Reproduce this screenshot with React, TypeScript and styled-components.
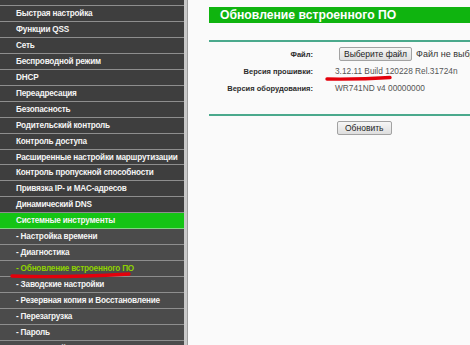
import React from 'react';
import styled, { createGlobalStyle } from 'styled-components';

const GlobalStyle = createGlobalStyle`
  html, body {
    margin: 0;
    padding: 0;
    background: #fafafa;
    overflow: hidden;
  }
  body {
    font-family: "Liberation Sans", Arial, sans-serif;
  }
`;

interface IMenuItem {
  label: string;
  sub?: boolean;
  active?: boolean;
  current?: boolean;
}

const menu: IMenuItem[] = [
  { label: 'Состояние' },
  { label: 'Быстрая настройка' },
  { label: 'Функции QSS' },
  { label: 'Сеть' },
  { label: 'Беспроводной режим' },
  { label: 'DHCP' },
  { label: 'Переадресация' },
  { label: 'Безопасность' },
  { label: 'Родительский контроль' },
  { label: 'Контроль доступа' },
  { label: 'Расширенные настройки маршрутизации' },
  { label: 'Контроль пропускной способности' },
  { label: 'Привязка IP- и MAC-адресов' },
  { label: 'Динамический DNS' },
  { label: 'Системные инструменты', active: true },
  { label: 'Настройка времени', sub: true },
  { label: 'Диагностика', sub: true },
  { label: 'Обновление встроенного ПО', sub: true, current: true },
  { label: 'Заводские настройки', sub: true },
  { label: 'Резервная копия и Восстановление', sub: true },
  { label: 'Перезагрузка', sub: true },
  { label: 'Пароль', sub: true },
  { label: 'Системный журнал', sub: true },
];

export default function App() {
  return (
    <>
      <GlobalStyle />
      <Page>
        <Sidebar>
          <Menu>
            {menu.map((item) => (
              <MenuItem key={item.label} $sub={item.sub} $active={item.active} $current={item.current}>
                {item.sub ? `- ${item.label}` : item.label}
              </MenuItem>
            ))}
          </Menu>
        </Sidebar>
        <Edge />
        <Content>
          <TitleBar>Обновление встроенного ПО</TitleBar>
          <Rule />
          <Form>
            <Label>Файл:</Label>
            <Value>
              <Button $pad={4}>Выберите файл</Button>
              <FileHint>Файл не выбран</FileHint>
            </Value>
            <Label>Версия прошивки:</Label>
            <Value>3.12.11 Build 120228 Rel.31724n</Value>
            <Label>Версия оборудования:</Label>
            <Value>WR741ND v4 00000000</Value>
          </Form>
          <Rule $mt={17} />
          <Actions>
            <Button $pad={7}>Обновить</Button>
          </Actions>
        </Content>
        <Marks width="470" height="345" viewBox="0 0 470 345">
          <path d="M12 276 Q60 278 129 274" />
          <path d="M327 79 Q360 79.5 390 77.5" />
        </Marks>
      </Page>
    </>
  );
}

const Page = styled.div`
  position: relative;
  display: flex;
  width: 470px;
  height: 345px;
  overflow: hidden;
`;

const Sidebar = styled.div`
  flex: none;
  width: 184px;
  overflow: hidden;
  background: #3e3e3e;
`;

const Menu = styled.div`
  display: flex;
  flex-direction: column;
  margin-top: -9.85px;
`;

const MenuItem = styled.div<{ $sub?: boolean; $active?: boolean; $current?: boolean }>`
  height: 14.95px;
  display: flex;
  align-items: center;
  padding-left: 16px;
  border-bottom: 1px solid ${(p) => (p.$active ? '#7fd67f' : '#8e8e8e')};
  background: ${(p) => (p.$active ? '#14c414' : p.$sub ? '#4b4b4b' : '#3e3e3e')};
  color: ${(p) => (p.$current ? '#8ed200' : '#f4f4f4')};
  font-size: 8.2px;
  font-weight: bold;
  letter-spacing: -0.2px;
  white-space: nowrap;
`;

const Edge = styled.div`
  flex: none;
  width: 3px;
  background: #c9c9c9;
  border-right: 1px solid #9c9c9c;
`;

const Content = styled.div`
  flex: 1;
  min-width: 0;
  padding: 7px 0 0 21px;
  white-space: nowrap;
`;

const TitleBar = styled.div`
  height: 16px;
  display: flex;
  align-items: center;
  padding-left: 11px;
  background: #0fb40f;
  color: #ffffff;
  font-size: 12.2px;
  font-weight: bold;
`;

const Rule = styled.div<{ $mt?: number }>`
  height: 2px;
  margin-top: ${(p) => p.$mt ?? 17}px;
  background: #4aa98c;
`;

const Form = styled.div`
  display: grid;
  grid-template-columns: 104px 1fr;
  grid-auto-rows: 17px;
  column-gap: 22px;
  margin-top: 3.5px;
  align-items: center;
`;

const Label = styled.div`
  text-align: right;
  color: #2c2c2c;
  font-size: 7.5px;
  font-weight: bold;
`;

const Value = styled.div`
  display: flex;
  align-items: center;
  color: #555555;
  font-size: 8.3px;
`;

const FileHint = styled.span`
  margin-left: 4px;
  color: #333333;
  font-size: 9px;
`;

const Button = styled.button<{ $pad: number }>`
  height: 14px;
  margin-left: 4px;
  padding: 0 ${(p) => p.$pad}px;
  border: 1px solid #a2a2a2;
  border-radius: 2px;
  background: linear-gradient(#f6f6f6, #dedede);
  color: #222222;
  font-family: "Liberation Sans", Arial, sans-serif;
  font-size: 8.5px;
  line-height: 12px;
`;

const Actions = styled.div`
  display: flex;
  padding: 5px 0 0 124px;
`;

const Marks = styled.svg`
  position: absolute;
  left: 0;
  top: 0;
  pointer-events: none;
  fill: none;
  stroke: #e3000b;
  stroke-width: 3.4;
  stroke-linecap: round;
`;
